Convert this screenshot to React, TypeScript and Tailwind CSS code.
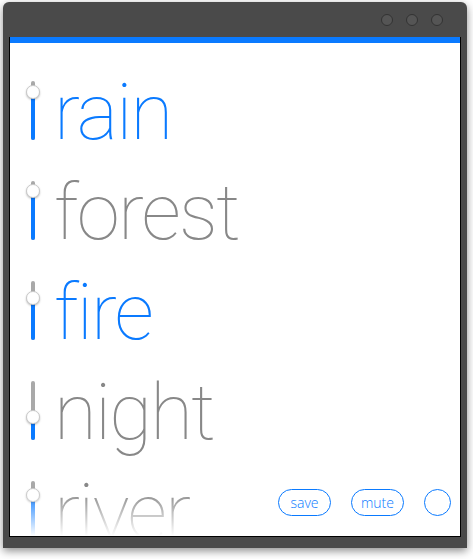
import React from "react";

const sounds = [
  { name: "rain", on: true, knob: 11 },
  { name: "forest", on: false, knob: 10 },
  { name: "fire", on: true, knob: 17 },
  { name: "night", on: false, knob: 36 },
  { name: "river", on: false, knob: 14 },
];

function Slider({ knob }: { knob: number }) {
  return (
    <div className="relative w-[4px] h-[59px] rounded-full bg-[#a9a9a9]">
      <div
        className="absolute left-0 bottom-0 w-[4px] rounded-full bg-[#0a7aff]"
        style={{ top: knob }}
      />
      <div
        className="absolute left-[-5px] w-[14px] h-[14px] rounded-full bg-white border border-[#c8c8c8] shadow-[0_1px_2px_rgba(0,0,0,0.25)]"
        style={{ top: knob - 7 }}
      />
    </div>
  );
}

function Row({ name, on, knob }: { name: string; on: boolean; knob: number }) {
  return (
    <div className="h-[100px] flex items-center">
      <div className="w-[44px] flex justify-center pl-[1px]">
        <Slider knob={knob} />
      </div>
      <span
        className={`text-[78px] leading-none font-thin tracking-[-1.8px] mt-[6px] ${
          on ? "text-[#0a7aff]" : "text-[#888888]"
        }`}
        style={{ fontFamily: "Roboto, 'Liberation Sans', sans-serif" }}
      >
        {name}
      </span>
    </div>
  );
}

export default function App() {
  return (
    <div className="w-[473px] h-[559px] bg-white pt-[2px] pl-[3px]">
      <div className="w-[464px] h-[546px] bg-[#4a4a4a] rounded-t-[6px] flex flex-col px-[6px] pb-[11px] shadow-[0_3px_8px_rgba(0,0,0,0.45)]">
        <div className="h-[35px] shrink-0 flex items-center justify-end gap-[13px] pr-[18px]">
          <div className="w-[12px] h-[12px] rounded-full bg-[#555] border border-[#333]" />
          <div className="w-[12px] h-[12px] rounded-full bg-[#555] border border-[#333]" />
          <div className="w-[12px] h-[12px] rounded-full bg-[#555] border border-[#333]" />
        </div>
        <div className="flex-1 relative overflow-hidden bg-white border-x border-b border-black">
          <div className="h-[6px] bg-[#0a7aff]" />
          <div className="pt-[17px]">
            {sounds.map((s) => (
              <Row key={s.name} name={s.name} on={s.on} knob={s.knob} />
            ))}
          </div>
          <div className="absolute left-0 right-0 bottom-0 h-[45px] bg-gradient-to-b from-white/0 to-white" />
          <div
            className="absolute right-[9px] bottom-[20px] flex items-center gap-[20px] text-[#0a7aff] text-[14px] font-light"
            style={{ fontFamily: "'Open Sans', 'Liberation Sans', sans-serif" }}
          >
            <button className="h-[27px] w-[53px] rounded-full border border-[#0a7aff] leading-none">
              save
            </button>
            <button className="h-[27px] w-[53px] rounded-full border border-[#0a7aff] leading-none">
              mute
            </button>
            <div className="w-[27px] h-[27px] rounded-full border border-[#0a7aff]" />
          </div>
        </div>
      </div>
    </div>
  );
}
